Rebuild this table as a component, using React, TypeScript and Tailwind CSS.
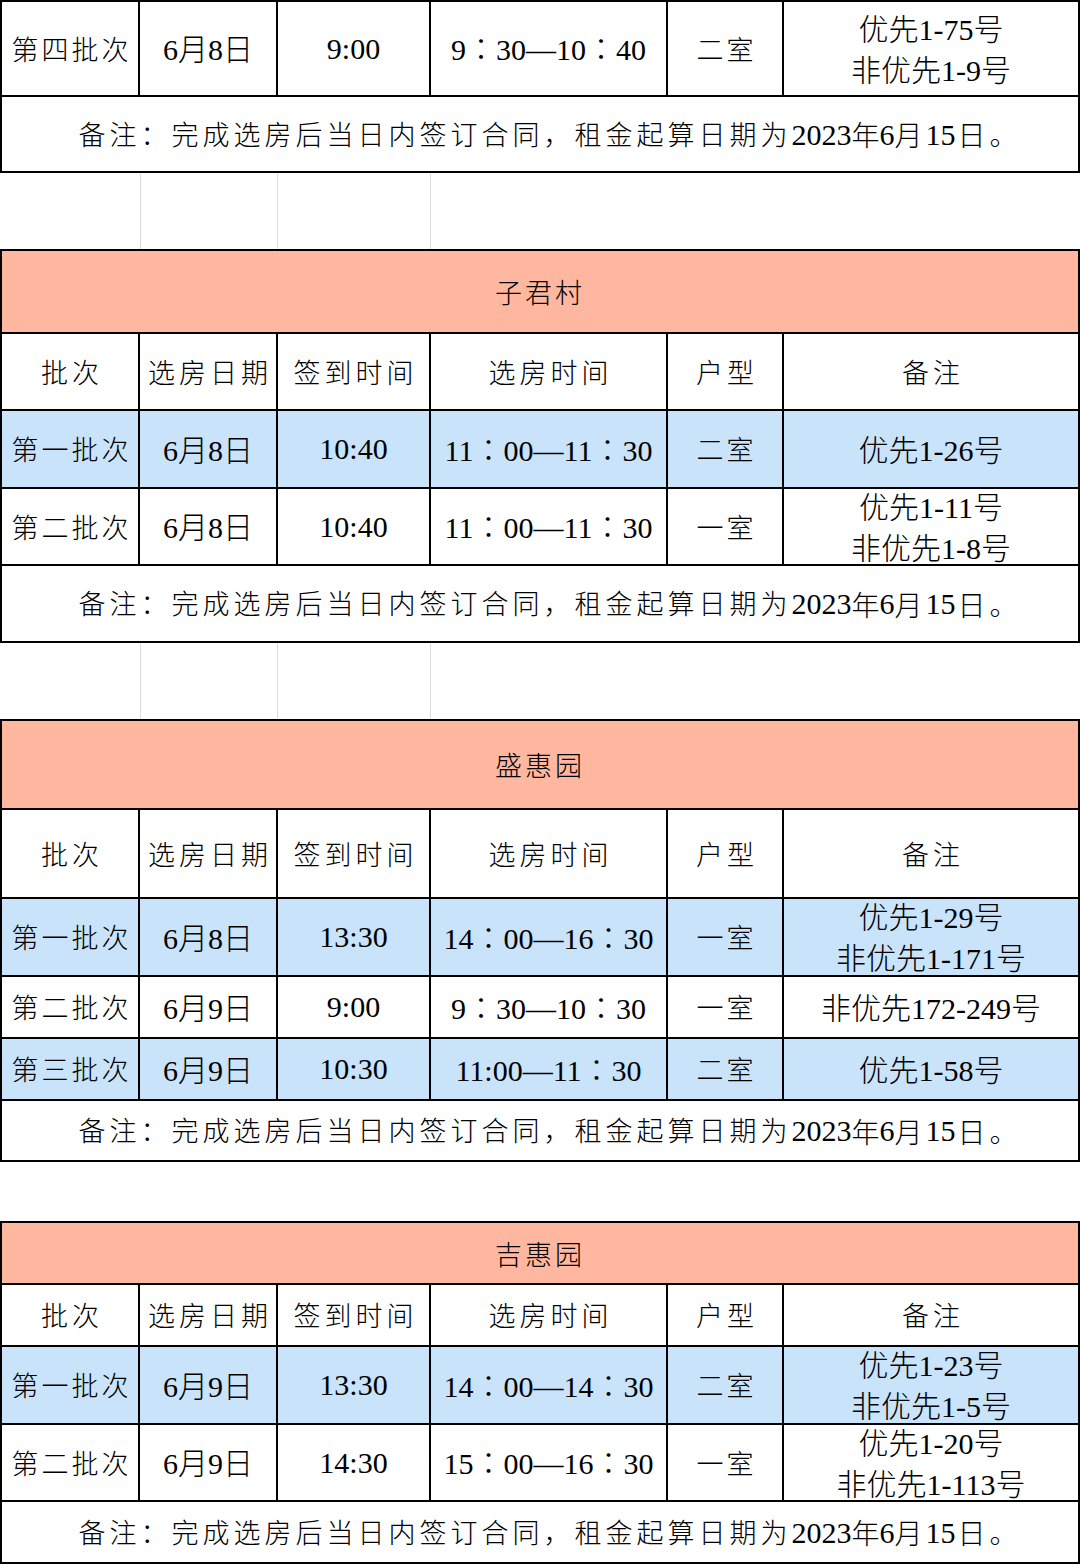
import React from "react";

const LAT = "font-['Liberation_Serif','Times_New_Roman',serif]";
const SC = "font-['Noto_Sans_CJK_SC_Light','Noto_Sans_CJK_SC',sans-serif]";
const JP = "font-['Noto_Sans_CJK_JP_Light','Noto_Sans_CJK_JP',sans-serif]";
const GRID = "grid grid-cols-[138px_138px_153px_237px_116px_296px]";
const CJK = /[\u3000-\u9fff\uff00-\uffef]/;

function T({ s, jp }: { s: string; jp?: boolean }) {
  const parts = s.match(/[\u3000-\u9fff\uff00-\uffef]+|[^\u3000-\u9fff\uff00-\uffef]+/g) || [];
  return (
    <span>
      {parts.map((p, i) =>
        CJK.test(p) ? (
          <span key={i} className={jp ? JP : SC}>
            {p}
          </span>
        ) : (
          <span key={i} className={LAT}>
            {p}
          </span>
        )
      )}
    </span>
  );
}

type Row = { h: string; blue?: boolean; cells: React.ReactNode[] };

function Cell({ children, h, blue }: { children: React.ReactNode; h: string; blue?: boolean }) {
  return (
    <div
      className={`${h} ${blue ? "bg-[#c9e3fb]" : "bg-white"} border-r-2 border-b-2 border-black flex flex-col items-center justify-center text-center leading-[38px] whitespace-nowrap`}
    >
      {children}
    </div>
  );
}

const S = (s: string) => <T s={s} />;
const Tm = (s: string) => <T s={s} jp />;

function Two({ a, b }: { a: string; b: string }) {
  return (
    <>
      <T s={a} />
      <T s={b} />
    </>
  );
}

const B = (s: string) => <span className={`text-[27px] tracking-[3px] pl-[3px] ${SC}`}>{s}</span>;

function Note() {
  return (
    <>
      <span className={`text-[27px] tracking-[4px] ${SC}`}>备注：完成选房后当日内签订合同，租金起算日期为</span>
      <span className={LAT}>2023</span>
      <span className={`text-[28px] ${SC}`}>年</span>
      <span className={LAT}>6</span>
      <span className={`text-[28px] ${SC}`}>月</span>
      <span className={`pl-[3px] ${LAT}`}>15</span>
      <span className={`text-[28px] tracking-[4px] pl-[2px] ${SC}`}>日。</span>
    </>
  );
}

function Section({
  title,
  titleH,
  headH,
  rows,
  noteH,
}: {
  title?: string;
  titleH?: string;
  headH?: string;
  rows: Row[];
  noteH: string;
}) {
  const heads = ["批次", "选房日期", "签到时间", "选房时间", "户型", "备注"];
  return (
    <div className={`${GRID} border-l-2 border-t-2 border-black`}>
      {title && (
        <div
          className={`col-span-6 ${titleH} bg-[#ffb89f] border-r-2 border-b-2 border-black flex items-center justify-center tracking-[3px] text-[27px] pt-[2px] ${SC}`}
        >
          {title}
        </div>
      )}
      {headH &&
        heads.map((t, i) => (
          <Cell key={i} h={headH}>
            <span className={`text-[27px] tracking-[4px] pl-[4px] ${SC}`}>{t}</span>
          </Cell>
        ))}
      {rows.map((r, ri) =>
        r.cells.map((c, ci) => (
          <Cell key={`${ri}-${ci}`} h={r.h} blue={r.blue}>
            {c}
          </Cell>
        ))
      )}
      <div
        className={`col-span-6 ${noteH} bg-white border-r-2 border-b-2 border-black flex items-center justify-center pl-[20px] whitespace-nowrap`}
      >
        <Note />
      </div>
    </div>
  );
}

function Gap({ h, lines }: { h: string; lines?: boolean }) {
  return (
    <div className={`${h} flex bg-white`}>
      {lines && (
        <>
          <div className="w-[141px] border-r border-[#dcdcdc]" />
          <div className="w-[137px] border-r border-[#dcdcdc]" />
          <div className="w-[153px] border-r border-[#dcdcdc]" />
        </>
      )}
    </div>
  );
}

export default function App() {
  return (
    <div className={`w-[1080px] h-[1564px] bg-white text-black text-[30px] overflow-hidden ${LAT}`}>
      <Section
        rows={[
          {
            h: "h-[95px]",
            cells: [
              B("第四批次"),
              S("6月8日"),
              S("9:00"),
              Tm("9：30—10：40"),
              B("二室"),
              <Two a="优先1-75号" b="非优先1-9号" />,
            ],
          },
        ]}
        noteH="h-[76px]"
      />
      <Gap h="h-[76px]" lines />
      <Section
        title="子君村"
        titleH="h-[83px]"
        headH="h-[77px]"
        rows={[
          {
            h: "h-[78px]",
            blue: true,
            cells: [B("第一批次"), S("6月8日"), S("10:40"), Tm("11：00—11：30"), B("二室"), S("优先1-26号")],
          },
          {
            h: "h-[77px]",
            cells: [
              B("第二批次"),
              S("6月8日"),
              S("10:40"),
              Tm("11：00—11：30"),
              B("一室"),
              <Two a="优先1-11号" b="非优先1-8号" />,
            ],
          },
        ]}
        noteH="h-[77px]"
      />
      <Gap h="h-[76px]" lines />
      <Section
        title="盛惠园"
        titleH="h-[89px]"
        headH="h-[89px]"
        rows={[
          {
            h: "h-[78px]",
            blue: true,
            cells: [
              B("第一批次"),
              S("6月8日"),
              S("13:30"),
              Tm("14：00—16：30"),
              B("一室"),
              <Two a="优先1-29号" b="非优先1-171号" />,
            ],
          },
          {
            h: "h-[62px]",
            cells: [B("第二批次"), S("6月9日"), S("9:00"), Tm("9：30—10：30"), B("一室"), S("非优先172-249号")],
          },
          {
            h: "h-[62px]",
            blue: true,
            cells: [B("第三批次"), S("6月9日"), S("10:30"), Tm("11:00—11：30"), B("二室"), S("优先1-58号")],
          },
        ]}
        noteH="h-[61px]"
      />
      <Gap h="h-[59px]" />
      <Section
        title="吉惠园"
        titleH="h-[62px]"
        headH="h-[62px]"
        rows={[
          {
            h: "h-[78px]",
            blue: true,
            cells: [
              B("第一批次"),
              S("6月9日"),
              S("13:30"),
              Tm("14：00—14：30"),
              B("二室"),
              <Two a="优先1-23号" b="非优先1-5号" />,
            ],
          },
          {
            h: "h-[77px]",
            cells: [
              B("第二批次"),
              S("6月9日"),
              S("14:30"),
              Tm("15：00—16：30"),
              B("一室"),
              <Two a="优先1-20号" b="非优先1-113号" />,
            ],
          },
        ]}
        noteH="h-[62px]"
      />
    </div>
  );
}
